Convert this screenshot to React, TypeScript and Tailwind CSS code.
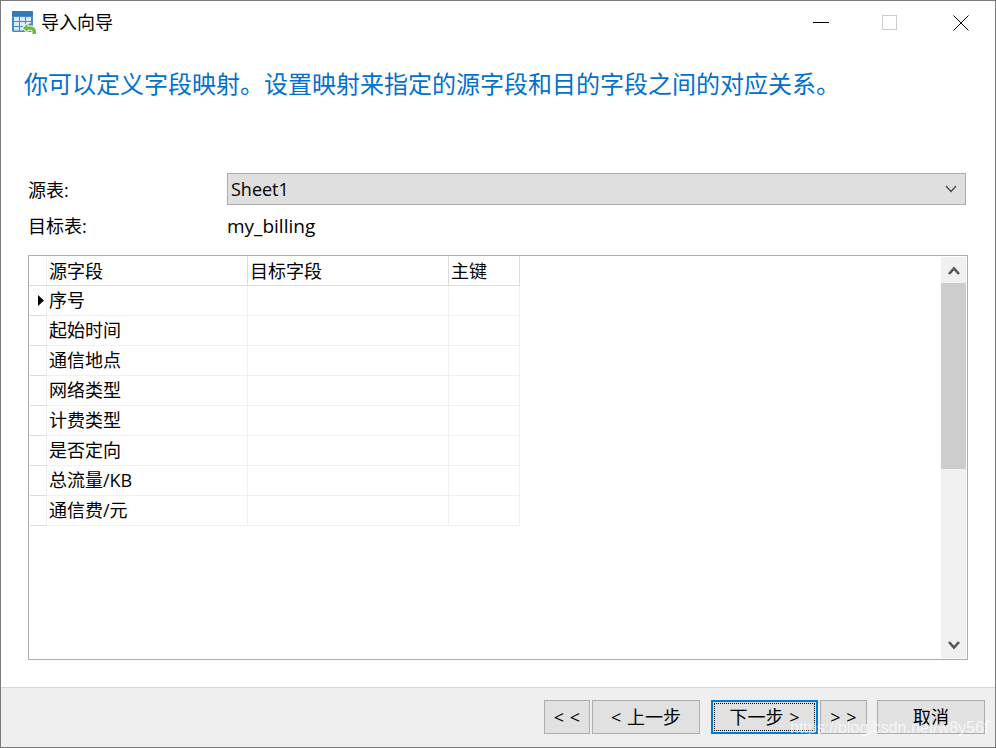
const font = "font-['Open_Sans','Noto_Sans_CJK_SC',sans-serif]";

const rows = ["序号", "起始时间", "通信地点", "网络类型", "计费类型", "是否定向", "总流量/KB", "通信费/元"];

function Btn({ children, className }: { children: React.ReactNode; className: string }) {
  return (
    <div className={`h-[34px] flex items-center justify-center border border-[#adadad] bg-[#e1e1e1] text-[18px] text-black [word-spacing:1px] ${className}`}>
      {children}
    </div>
  );
}

export default function App() {
  return (
    <div className={`${font} relative w-[996px] h-[748px] overflow-hidden bg-white border border-[#7a7a7a] flex flex-col text-black`}>
      <div className="h-[43px] flex items-center shrink-0">
        <svg className="ml-[11px] w-[25px] h-[24px]" viewBox="0 0 25 24">
          <rect x="0" y="0" width="21" height="21" rx="1.5" fill="#4a8ac4" />
          <rect x="0" y="0" width="21" height="5" rx="1" fill="#2f7ab9" />
          <g fill="#dbe9f6">
            <rect x="2" y="6" width="5" height="4" />
            <rect x="8" y="6" width="5" height="4" />
            <rect x="14" y="6" width="5" height="4" />
            <rect x="2" y="11" width="5" height="4" />
            <rect x="8" y="11" width="5" height="4" />
            <rect x="14" y="11" width="5" height="1.5" />
            <rect x="2" y="16" width="5" height="3.5" />
            <rect x="8" y="16" width="3" height="3.5" />
          </g>
          <path d="M9.5 17 L16.5 10.5 V14.5 H18.5 C22.5 14.5 25 17.2 25 21 V24 H19.5 V21 C19.5 20 19.2 19.7 18.5 19.7 H16.5 V23.5 Z" fill="#fff" />
          <path d="M11 17 L15.5 12.8 V15.5 H18.5 C22 15.5 24 17.8 24 21 V23 H20.5 V21 C20.5 19.4 20 18.7 18.5 18.7 H15.5 V21.2 Z" fill="#6cbb3c" />
        </svg>
        <span className="ml-[4px] text-[18px] leading-[24px] -mt-[1px]">导入向导</span>
        <div className="ml-auto flex items-center">
          <svg className="w-[16px] h-[16px] mr-[52px]" viewBox="0 0 16 16"><path d="M0 7.5H16" stroke="#000" strokeWidth="1" /></svg>
          <svg className="w-[16px] h-[16px] mr-[56px]" viewBox="0 0 16 16"><rect x="1.5" y="0.5" width="14" height="14" fill="none" stroke="#ccc" /></svg>
          <svg className="w-[16px] h-[16px] mr-[26px]" viewBox="0 0 16 16"><path d="M0.5 0.5L15.5 15.5M15.5 0.5L0.5 15.5" stroke="#000" strokeWidth="1" /></svg>
        </div>
      </div>

      <div className="ml-[23px] mt-[17px] h-[46px] text-[24px] leading-[46px] text-[#0070d0] shrink-0 whitespace-nowrap">
        你可以定义字段映射。设置映射来指定的源字段和目的字段之间的对应关系。
      </div>

      <div className="mt-[66px] h-[32px] flex items-center shrink-0">
        <span className="ml-[27px] w-[199px] text-[18px] pt-[2px]">源表:</span>
        <div className="w-[739px] h-[32px] bg-[#dfdfdf] border border-[#ababab] flex items-center pl-[3px] pr-[8px] text-[18px]">
          Sheet1
          <svg className="ml-auto w-[12px] h-[8px]" viewBox="0 0 12 8"><path d="M1 1L6 6.5L11 1" fill="none" stroke="#444" strokeWidth="1.2" /></svg>
        </div>
      </div>
      <div className="mt-[5px] h-[32px] flex items-center shrink-0 text-[18px]">
        <span className="ml-[27px] w-[199px]">目标表:</span>
        <span className="text-[19px]">my_billing</span>
      </div>

      <div className="ml-[27px] mt-[13px] w-[940px] h-[405px] border border-[#adadad] flex shrink-0 text-[18px] leading-[24px]">
        <div className="flex-1">
          <div className="flex w-[491px] h-[30px] border-b border-[#dcdcdc]">
            <div className="w-[18px] border-r border-[#f0f0f0]" />
            <div className="w-[201px] pl-[2px] border-r border-[#dcdcdc] pt-[3px]">源字段</div>
            <div className="w-[201px] pl-[2px] border-r border-[#dcdcdc] pt-[3px]">目标字段</div>
            <div className="w-[71px] pl-[2px] border-r border-[#dcdcdc] pt-[3px]">主键</div>
          </div>
          {rows.map((r, i) => (
            <div key={r} className="flex w-[491px] h-[30px]">
              <div className="ml-px w-[17px] border-r border-b border-r-[#f0f0f0] border-b-[#dcdcdc] flex items-center justify-end pr-[2px]">
                {i === 0 && <svg className="w-[6px] h-[11px]" viewBox="0 0 6 11"><path d="M0 0L6 5.5L0 11Z" fill="#000" /></svg>}
              </div>
              <div className="w-[201px] pl-[2px] border-r border-b border-[#f0f0f0] pt-[2px] whitespace-nowrap">{r}</div>
              <div className="w-[201px] border-r border-b border-[#f0f0f0]" />
              <div className="w-[71px] border-r border-b border-[#f0f0f0]" />
            </div>
          ))}
        </div>
        <div className="w-[25px] mr-[1px] my-px bg-[#f0f0f0] flex flex-col">
          <div className="h-[26px] flex items-center justify-center">
            <svg className="w-[12px] h-[9px]" viewBox="0 0 12 9"><path d="M1 8L6 2.5L11 8" fill="none" stroke="#555" strokeWidth="2.6" /></svg>
          </div>
          <div className="h-[186px] bg-[#cdcdcd]" />
          <div className="mt-auto h-[26px] flex items-center justify-center">
            <svg className="w-[12px] h-[9px]" viewBox="0 0 12 9"><path d="M1 1L6 6.5L11 1" fill="none" stroke="#555" strokeWidth="2.6" /></svg>
          </div>
        </div>
      </div>

      <div className="mt-[27px] flex-1 bg-[#efefef] border-t border-[#d6d6d6] flex items-start pt-[12px]">
        <Btn className="ml-[543px] w-[46px]">&lt; &lt;</Btn>
        <Btn className="ml-[2px] w-[108px]">&lt; 上一步</Btn>
        <div className="ml-[11px] w-[107px] h-[34px] border-2 border-[#0078d7] bg-[#e1e1e1] p-px text-[18px] [word-spacing:1px]">
          <div className="w-full h-full border border-dotted border-black flex items-center justify-center">下一步 &gt;</div>
        </div>
        <Btn className="ml-[2px] w-[47px]">&gt; &gt;</Btn>
        <Btn className="ml-[10px] w-[108px]">取消</Btn>
      </div>

      <div className="absolute left-[789px] top-[715px] text-[16px] leading-[24px] text-white/70 whitespace-nowrap font-['Liberation_Sans',sans-serif]">
        https://blog.csdn.net/w8y56f
      </div>
    </div>
  );
}
